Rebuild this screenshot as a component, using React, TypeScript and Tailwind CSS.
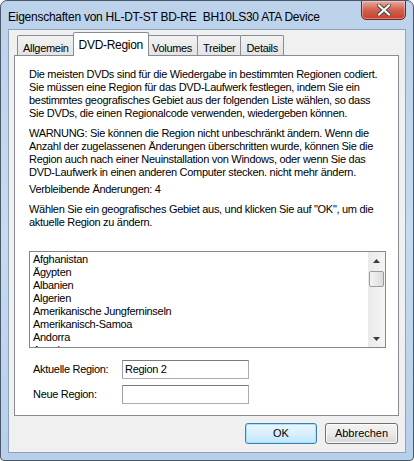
import React from 'react';

const countries = [
  'Afghanistan',
  'Ägypten',
  'Albanien',
  'Algerien',
  'Amerikanische Jungferninseln',
  'Amerikanisch-Samoa',
  'Andorra',
  'Angola',
];

const tabs = ['Allgemein', 'DVD-Region', 'Volumes', 'Treiber', 'Details'];

function CloseButton() {
  return (
    <div className="w-[45px] h-[20px] -mt-[1px] rounded-b-[5px] border border-[#6e2a22] bg-gradient-to-b from-[#e9a99c] via-[#d1604d] to-[#c5412c] flex items-center justify-center shadow-[inset_0_0_0_1px_rgba(255,255,255,0.35)]">
      <svg width="14" height="12" viewBox="0 0 14 12">
        <path d="M2 1.5 L12 10.5 M12 1.5 L2 10.5" stroke="#4a4a4a" strokeWidth="4" strokeLinecap="square" />
        <path d="M2 1.5 L12 10.5 M12 1.5 L2 10.5" stroke="#ffffff" strokeWidth="2" strokeLinecap="square" />
      </svg>
    </div>
  );
}

function ScrollBar() {
  return (
    <div className="w-[17px] h-full bg-gradient-to-r from-[#eaeaea] to-[#f5f5f5] flex flex-col items-center">
      <div className="h-[17px] w-full flex items-center justify-center">
        <svg width="7" height="4" viewBox="0 0 7 4">
          <path d="M3.5 0 L7 4 L0 4 Z" fill="#3c3c3c" />
        </svg>
      </div>
      <div className="w-[15px] h-[16px] mt-[2px] rounded-[2px] border border-[#9a9a9a] bg-gradient-to-r from-[#f3f3f3] to-[#dcdcdc]" />
      <div className="flex-1" />
      <div className="h-[17px] w-full flex items-center justify-center">
        <svg width="7" height="4" viewBox="0 0 7 4">
          <path d="M0 0 L7 0 L3.5 4 Z" fill="#3c3c3c" />
        </svg>
      </div>
    </div>
  );
}

function TabStrip() {
  return (
    <div className="h-[23px] flex items-end pl-[3px] tracking-[-0.3px]">
      {tabs.map((t) => {
        const active = t === 'DVD-Region';
        return active ? (
          <div
            key={t}
            className="relative z-10 -mx-[2px] h-[24px] px-[5px] pt-[3px] bg-white border border-b-0 border-[#898c95] rounded-t-[2px] text-[12px] text-black"
          >
            {t}
          </div>
        ) : (
          <div
            key={t}
            className="h-[21px] px-[5px] pt-[4px] -ml-[1px] first:ml-0 bg-gradient-to-b from-[#f2f2f2] to-[#e3e3e3] border border-b-0 border-[#898c95] rounded-t-[2px] text-[11px] text-black"
          >
            {t}
          </div>
        );
      })}
    </div>
  );
}

export default function App() {
  return (
    <div className="w-[414px] h-[461px] rounded-t-[7px] rounded-b-[4px] border border-[#4a5867] bg-gradient-to-b from-[#bcd2ea] via-[#c6dbf1] to-[#b7cfe9] flex flex-col overflow-hidden font-['Liberation_Sans',sans-serif]">
      {/* title bar */}
      <div className="h-[28px] flex items-start justify-between pl-[7px] pr-[7px]">
        <span className="mt-[7px] text-[12px] tracking-[-0.25px] text-black whitespace-nowrap">
          Eigenschaften von HL-DT-ST BD-RE&nbsp; BH10LS30 ATA Device
        </span>
        <CloseButton />
      </div>

      {/* client area */}
      <div className="flex-1 mx-[7px] mb-[7px] border border-[#8da2bb] bg-[#f0f0f0] flex flex-col px-[5px] pt-[3px]">
        <TabStrip />
        <div className="w-[385px] h-[361px] -mt-[1px] bg-white border border-[#898c95] px-[14px] pt-[12px] text-[11px] leading-[13px] tracking-[-0.3px] text-black whitespace-nowrap overflow-hidden">
          <p>
            Die meisten DVDs sind für die Wiedergabe in bestimmten Regionen codiert.
            <br />
            Sie müssen eine Region für das DVD-Laufwerk festlegen, indem Sie ein
            <br />
            bestimmtes geografisches Gebiet aus der folgenden Liste wählen, so dass
            <br />
            Sie DVDs, die einen Regionalcode verwenden, wiedergeben können.
          </p>
          <p className="mt-[7px]">
            WARNUNG: Sie können die Region nicht unbeschränkt ändern. Wenn die
            <br />
            Anzahl der zugelassenen Änderungen überschritten wurde, können Sie die
            <br />
            Region auch nach einer Neuinstallation von Windows, oder wenn Sie das
            <br />
            DVD-Laufwerk in einen anderen Computer stecken. nicht mehr ändern.
          </p>
          <p className="mt-[4px]">Verbleibende Änderungen: 4</p>
          <p className="mt-[7px]">
            Wählen Sie ein geografisches Gebiet aus, und klicken Sie auf "OK", um die
            <br />
            aktuelle Region zu ändern.
          </p>

          {/* country list */}
          <div className="mt-[22px] w-[357px] h-[97px] border border-[#828790] flex overflow-hidden">
            <ul className="flex-1 pl-[3px] pt-[1px] overflow-hidden">
              {countries.map((c) => (
                <li key={c} className="h-[13px] leading-[13px]">
                  {c}
                </li>
              ))}
            </ul>
            <ScrollBar />
          </div>

          {/* region fields */}
          <div className="mt-[12px] pl-[4px] flex items-center">
            <span className="w-[89px]">Aktuelle Region:</span>
            <div className="w-[127px] h-[19px] border border-[#abadb3] border-t-[#7a7a7a] border-l-[#a0a0a0] pl-[2px] leading-[17px]">
              Region 2
            </div>
          </div>
          <div className="mt-[6px] pl-[4px] flex items-center">
            <span className="w-[89px]">Neue Region:</span>
            <div className="w-[127px] h-[19px] border border-[#abadb3] border-t-[#7a7a7a] border-l-[#a0a0a0]" />
          </div>
        </div>

        {/* dialog buttons */}
        <div className="mt-[7px] flex justify-end gap-[8px] pr-[2px]">
          <button className="w-[72px] h-[21px] rounded-[3px] border border-[#3c7fb1] bg-gradient-to-b from-[#eaf6fd] via-[#d9f0fc] to-[#bee6fd] shadow-[inset_0_0_0_1px_#a7e3fc] text-[11px] text-black">
            OK
          </button>
          <button className="w-[73px] h-[21px] rounded-[3px] border border-[#707070] bg-gradient-to-b from-[#f2f2f2] via-[#ebebeb] to-[#d6d6d6] shadow-[inset_0_0_0_1px_#fcfcfc] text-[11px] text-black">
            Abbrechen
          </button>
        </div>
      </div>
    </div>
  );
}
